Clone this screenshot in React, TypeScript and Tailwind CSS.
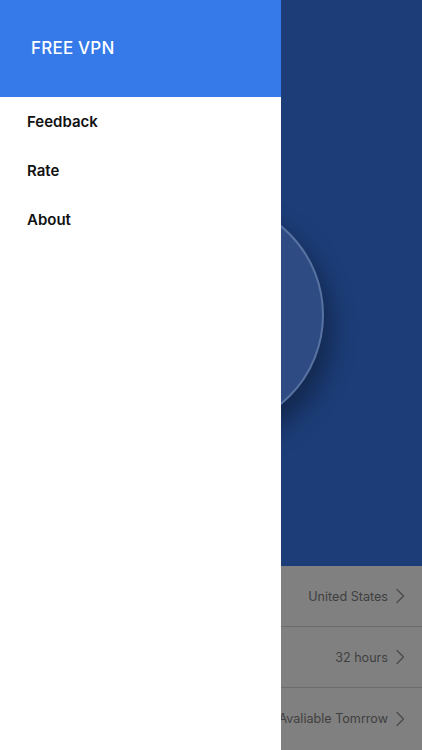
const rows = ['United States', '32 hours', 'Avaliable Tomrrow'];
const menu = ['Feedback', 'Rate', 'About'];

function Chevron() {
    return (
        <svg width="10" height="16" viewBox="0 0 10 16" fill="none" stroke="#4a4a4a" strokeWidth="1.3" strokeLinecap="round" strokeLinejoin="round">
            <path d="M2 1.5 L8.5 8 L2 14.5" />
        </svg>
    );
}

export default function App() {
    return (
        <div className="relative w-[422px] h-[750px] overflow-hidden font-['Inter','Liberation_Sans',sans-serif]">
            {/* screen behind the drawer */}
            <div className="flex flex-col h-full">
                <div className="h-[566px] bg-[#1c3d78] flex justify-center pt-[199px]">
                    <div className="w-[232px] h-[232px] rounded-full bg-[#2e4c83] border-2 border-[#5873a2] shadow-[8px_14px_24px_rgba(0,0,0,0.35)] ml-[-6px]"></div>
                </div>
                <div className="flex-1 bg-[#808080] flex flex-col">
                    {rows.map((label, i) => (
                        <div
                            key={label}
                            className={`h-[61px] flex items-center justify-end pr-[17px] gap-[7px] text-[12.6px] text-[#3f3f3f] ${i < rows.length - 1 ? 'border-b border-[#6c6c6c]' : ''}`}
                        >
                            <span className="pt-[2px]">{label}</span>
                            <Chevron />
                        </div>
                    ))}
                </div>
            </div>

            {/* drawer */}
            <div className="absolute top-0 left-0 w-[281px] h-full bg-white flex flex-col">
                <div className="h-[97px] bg-[#357ae8] flex items-center pl-[31px]">
                    <span className="text-white text-[17px] font-medium tracking-[0.2px]">FREE VPN</span>
                </div>
                <div className="flex flex-col pt-[1px]">
                    {menu.map(item => (
                        <div key={item} className="h-[49px] flex items-center pl-[27px] text-[15px] font-semibold text-[#111]">
                            {item}
                        </div>
                    ))}
                </div>
            </div>
        </div>
    );
}
